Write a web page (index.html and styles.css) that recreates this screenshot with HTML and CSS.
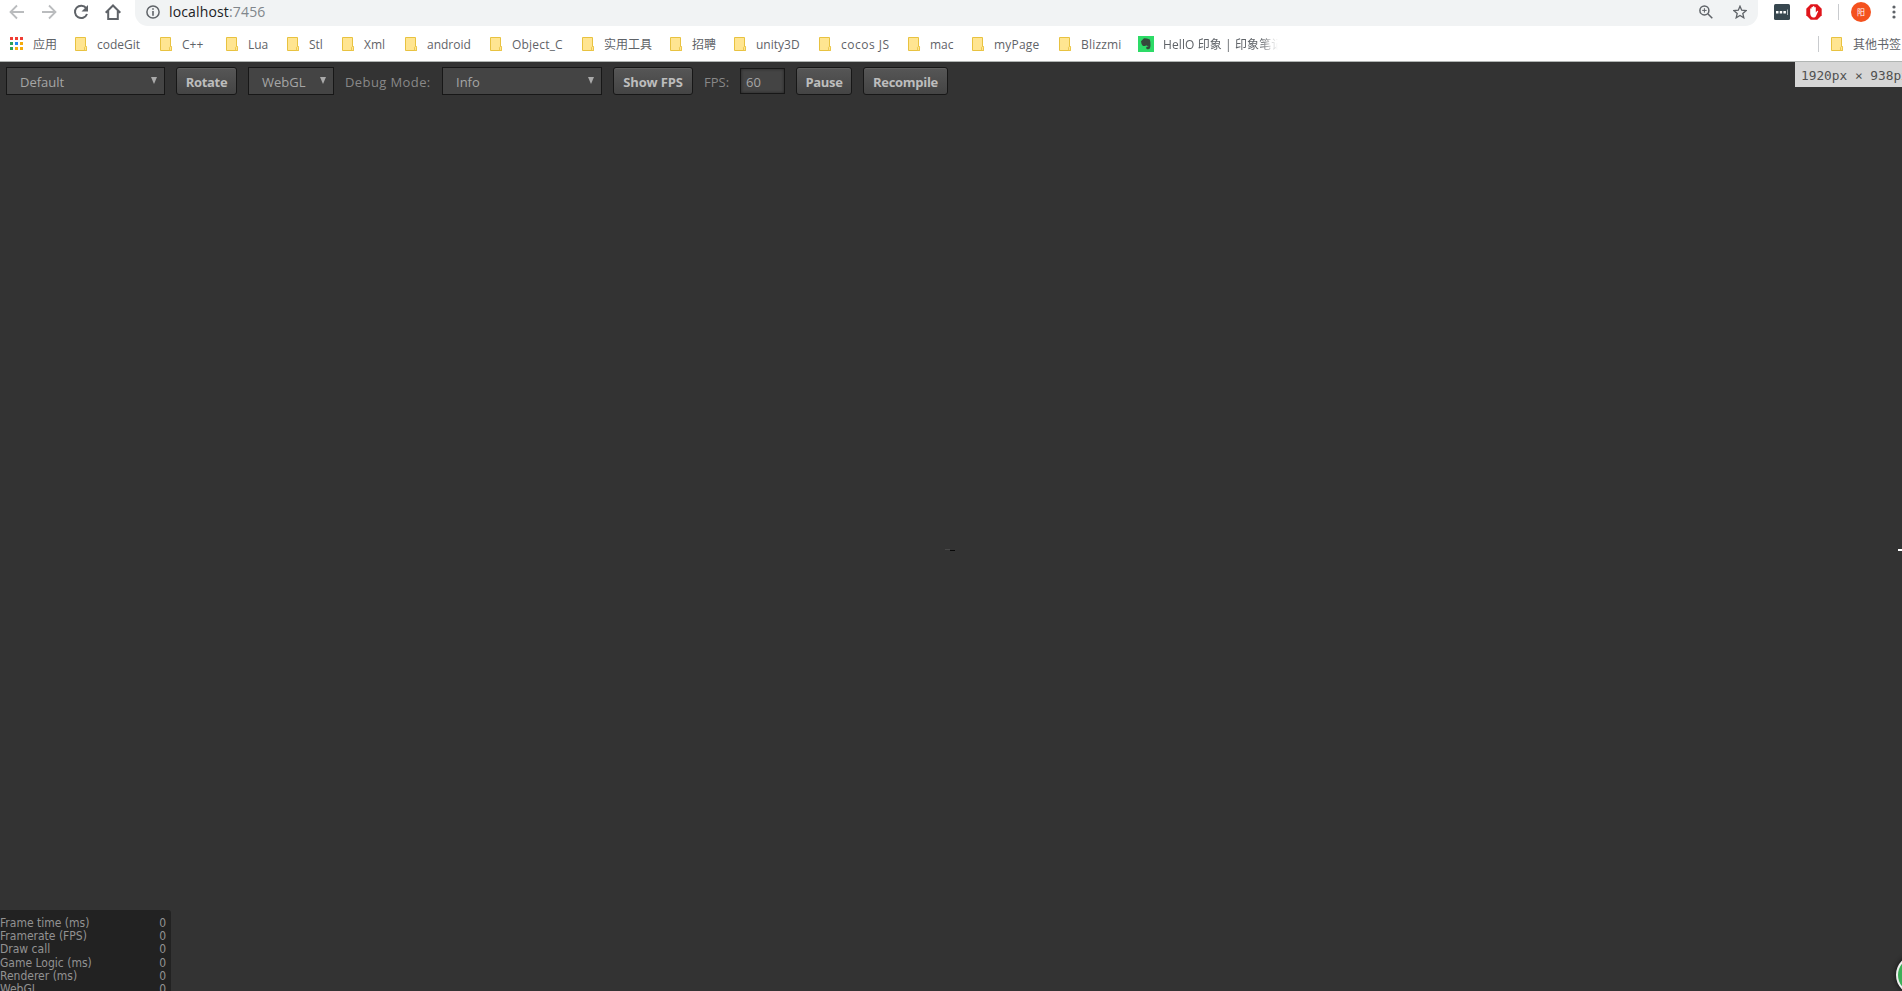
FILE: index.html
```html
<!DOCTYPE html>
<html lang="zh">
<head>
    <meta charset="UTF-8">
    <title>localhost:7456</title>
    <link rel="stylesheet" href="styles.css">
</head>
<body>
    <svg class="defs" width="0" height="0">
        <symbol id="folder" viewBox="0 0 13 14">
            <path d="M.5.5h10v9h1v4H.5z" fill="#ffe591" stroke="#e8c240"/>
            <path d="M9.5 13.5v-3.2l1-1 1 1v3.2z" fill="#ffe591" stroke="#e8c240" stroke-width=".8"/>
        </symbol>
    </svg>

    <div class="address-row">
        <div class="nav">
            <svg width="16" height="16" viewBox="0 0 16 16" fill="none" stroke="#babcbe" stroke-width="1.8"><path d="M15 8H2M8 1.5L1.5 8 8 14.5"/></svg>
            <svg width="16" height="16" viewBox="0 0 16 16" fill="none" stroke="#babcbe" stroke-width="1.8"><path d="M1 8h13M8 1.5L14.5 8 8 14.5"/></svg>
            <svg width="16" height="16" viewBox="0 0 16 16"><path d="M13.2 4.2A6.2 6.2 0 1 0 14 10" fill="none" stroke="#5f6368" stroke-width="2"/><path d="M15 1v6.5H8.5z" fill="#5f6368"/></svg>
            <svg width="16" height="16" viewBox="0 0 16 16" fill="none" stroke="#5f6368" stroke-width="2"><path d="M.7 8.7L8 1.5l7.3 7.2M3.2 7v8h9.6V7"/></svg>
        </div>
        <div class="omnibox">
            <svg width="14" height="14" viewBox="0 0 14 14"><circle cx="7" cy="7" r="6.1" fill="none" stroke="#5f6368" stroke-width="1.5"/><path d="M6.2 3.3h1.6v1.5H6.2zM6.2 6h1.6v4.7H6.2z" fill="#5f6368"/></svg>
            <span class="url">localhost<span class="port">:7456</span></span>
            <svg class="magnify" width="14" height="14" viewBox="0 0 14 14" fill="none" stroke="#5f6368" stroke-width="1.5"><circle cx="5.4" cy="5.4" r="4.5"/><path d="M8.8 8.8l4.5 4.5"/><path d="M3.2 5.4h4.4M5.4 3.2v4.4" stroke-width="1"/></svg>
            <svg width="14" height="14" viewBox="0 0 14 14" fill="none" stroke="#5f6368" stroke-width="1.3"><path d="M7 1.2l1.7 4 4.4.4-3.3 2.9 1 4.3L7 10.5l-3.8 2.3 1-4.3L.9 5.6l4.4-.4z"/></svg>
        </div>
        <div class="extensions">
            <svg width="16" height="16" viewBox="0 0 16 16"><rect width="16" height="16" rx="1.5" fill="#37474f"/><path d="M2 7h2.5v2.5H2zM5.700 7h2.500v2.500H5.700zM9.400 7h2.500v2.500H9.400z" fill="#fff"/><path d="M13.5 5.5v5.5" stroke="#aab4b8"/></svg>
            <svg class="adblock" width="16" height="16" viewBox="0 0 16 16"><path d="M4.7.3h6.6l4.4 4.4v6.6l-4.4 4.4H4.7L.3 11.3V4.7z" fill="#e0151b"/><path d="M4.200 9.500V4.800q.7-1 1.300 0V7V3.200q.7-1 1.400 0V7V2.600q.8-1 1.500 0V7V3.400q.7-1 1.400 0v5l1.200-1.500q1-.4 1.200.4l-2.400 5.100q-.7 1-1.700 1H7q-2.500-.3-2.800-3.900z" fill="#fff"/></svg>
            <span class="separator"></span>
            <span class="avatar">阳</span>
            <svg class="dots" width="4" height="14" viewBox="0 0 4 14" fill="#5f6368"><circle cx="2" cy="2" r="1.6"/><circle cx="2" cy="7" r="1.6"/><circle cx="2" cy="12" r="1.6"/></svg>
        </div>
    </div>

    <div class="bookmarks">
        <div class="bookmark apps">
            <svg width="13" height="13" viewBox="0 0 13 13"><path d="M0 0h3v3H0zM5 0h3v3H5zM10 0h3v3h-3z" fill="#f03d34"/><path d="M0 5h3v3H0zM0 10h3v3H0z" fill="#2da15a"/><path d="M5 5h3v3H5z" fill="#2188ef"/><path d="M10 5h3v3h-3zM5 10h3v3H5zM10 10h3v3h-3z" fill="#f5ab0b"/></svg>
            <span>应用</span>
        </div>
        <div class="bookmark w85"><svg class="folder"><use href="#folder"/></svg><span>codeGit</span></div>
        <div class="bookmark w66"><svg class="folder"><use href="#folder"/></svg><span>C++</span></div>
        <div class="bookmark w61"><svg class="folder"><use href="#folder"/></svg><span>Lua</span></div>
        <div class="bookmark w55"><svg class="folder"><use href="#folder"/></svg><span>Stl</span></div>
        <div class="bookmark w63"><svg class="folder"><use href="#folder"/></svg><span>Xml</span></div>
        <div class="bookmark w85"><svg class="folder"><use href="#folder"/></svg><span>android</span></div>
        <div class="bookmark w92 wide"><svg class="folder"><use href="#folder"/></svg><span>Object_C</span></div>
        <div class="bookmark w88"><svg class="folder"><use href="#folder"/></svg><span>实用工具</span></div>
        <div class="bookmark w64"><svg class="folder"><use href="#folder"/></svg><span>招聘</span></div>
        <div class="bookmark w85"><svg class="folder"><use href="#folder"/></svg><span>unity3D</span></div>
        <div class="bookmark w89 wider"><svg class="folder"><use href="#folder"/></svg><span>cocos JS</span></div>
        <div class="bookmark w64"><svg class="folder"><use href="#folder"/></svg><span>mac</span></div>
        <div class="bookmark w87 wide"><svg class="folder"><use href="#folder"/></svg><span>myPage</span></div>
        <div class="bookmark w79 wide"><svg class="folder"><use href="#folder"/></svg><span>Blizzmi</span></div>
        <div class="bookmark evernote">
            <svg width="16" height="16" viewBox="0 0 16 16"><rect width="16" height="16" fill="#2ddb67"/><path d="M3 5.2L6 2.3l3 .3 2.8.8q1 2.8.7 6.3-.3 3.6-2.2 3.6H9q-1-.7-.8-2 .8-1 2-.6V9.800q-1.300.3-2-.6-1.800 1.400-3.500.5Q3.200 8.200 3 5.200z" fill="#36473c"/></svg>
            <span class="fade">HellO 印象 | 印象笔记</span>
        </div>
        <div class="bookmark other"><svg class="folder"><use href="#folder"/></svg><span>其他书签</span></div>
    </div>

    <div class="game">
        <div class="toolbar">
            <div class="select device">Default<i></i></div>
            <button class="rotate">Rotate</button>
            <div class="select renderer">WebGL<i></i></div>
            <span class="label debug">Debug Mode:</span>
            <div class="select level">Info<i></i></div>
            <button class="show-fps">Show FPS</button>
            <span class="label fps">FPS:</span>
            <input type="text" value="60">
            <button class="pause">Pause</button>
            <button class="recompile">Recompile</button>
        </div>

        <div class="profiler">
            <div><span>Frame time (ms)</span><span>0</span></div>
            <div><span>Framerate (FPS)</span><span>0</span></div>
            <div><span>Draw call</span><span>0</span></div>
            <div><span>Game Logic (ms)</span><span>0</span></div>
            <div><span>Renderer (ms)</span><span>0</span></div>
            <div><span>WebGL</span><span>0</span></div>
        </div>

        <!-- overlays -->
        <div class="size-tip">1920px × 938px</div>
        <div class="speck"></div>
        <div class="edge-mark"></div>
        <div class="float-ball"></div>
    </div>
</body>
</html>
```
FILE: styles.css
```css
* {
    box-sizing: border-box;
}

body {
    margin: 0;
    height: 991px;
    overflow: hidden;
    display: flex;
    flex-direction: column;
    background: #fff;
    font-family: "Open Sans", "Noto Sans CJK SC", sans-serif;
    font-size: 12px;
}

svg {
    display: block;
    flex: none;
}

.defs {
    position: absolute;
}

/* browser bars */
.address-row {
    display: flex;
    height: 26px;
    flex: none;
}

.nav {
    display: flex;
    gap: 16px;
    width: 135px;
    padding: 4px 0 0 9px;
}

.omnibox {
    display: flex;
    align-items: center;
    width: 1623px;
    padding: 0 11px 2px;
    background: #f1f3f4;
    border-radius: 0 0 13px 13px;
}

.url {
    margin-left: 9px;
    font-size: 14px;
    line-height: 20px;
    letter-spacing: 0.15px;
    color: #202124;
}

.port {
    color: #80868b;
}

.magnify {
    margin-left: auto;
    margin-right: 20px;
}

.extensions {
    display: flex;
    align-items: center;
    padding: 0 0 2px 16px;
}

.adblock {
    margin-left: 16px;
}

.separator {
    width: 1px;
    height: 16px;
    margin-left: 16px;
    background: #c9cbce;
}

.avatar {
    width: 20px;
    height: 20px;
    margin-left: 12px;
    border-radius: 50%;
    background: #f4511e;
    color: #fff;
    font-size: 8px;
    line-height: 20px;
    text-align: center;
}

.dots {
    margin-left: 21px;
}

.bookmarks {
    display: flex;
    align-items: center;
    height: 36px;
    flex: none;
    border-bottom: 1px solid #b1b5b3;
    color: #5f6368;
}

.bookmark {
    display: flex;
    align-items: center;
    flex: none;
    height: 35px;
    white-space: nowrap;
}

.bookmark span {
    padding-top: 2px;
    line-height: 18px;
}

.wide {
    letter-spacing: 0.2px;
}

.wider {
    letter-spacing: 0.5px;
}

.folder {
    width: 13px;
    height: 14px;
    margin-right: 9px;
}

.apps {
    width: 75px;
    padding-left: 10px;
    gap: 10px;
}

.w55 { width: 55px; }
.w61 { width: 61px; }
.w63 { width: 63px; }
.w64 { width: 64px; }
.w66 { width: 66px; }
.w79 { width: 79px; }
.w85 { width: 85px; }
.w87 { width: 87px; }
.w88 { width: 88px; }
.w89 { width: 89px; }
.w92 { width: 92px; }

.evernote {
    gap: 9px;
}

.fade {
    width: 115px;
    overflow: hidden;
    letter-spacing: 0.1px;
    -webkit-mask-image: linear-gradient(to right, #000 84%, transparent);
    mask-image: linear-gradient(to right, #000 84%, transparent);
}

.other {
    margin-left: auto;
    margin-right: 1px;
}

.other::before {
    content: "";
    width: 1px;
    height: 16px;
    margin-right: 12px;
    background: #c9cbce;
}

/* preview page */
.game {
    position: relative;
    flex: 1;
    display: flex;
    flex-direction: column;
    justify-content: space-between;
    overflow: hidden;
    background: #333;
}

.toolbar {
    display: flex;
    align-items: center;
    height: 38px;
    padding: 0 6px;
    color: #a6a6a6;
    font-size: 13px;
}

.select {
    display: flex;
    align-items: center;
    justify-content: space-between;
    height: 28px;
    padding: 2px 7px 0 13px;
    border: 1px solid #171717;
    background: #444;
}

.select i {
    width: 6px;
    height: 7px;
    margin-top: -3px;
    background: #aaa;
    clip-path: polygon(0 0, 100% 0, 50% 100%);
}

.toolbar button {
    height: 28px;
    padding: 2px 0 0;
    border: 1px solid #171717;
    border-radius: 3px;
    background: linear-gradient(#565656, #444);
    box-shadow: inset 0 1px #606060;
    color: #bdbdbd;
    font: bold 13px "Open Sans", sans-serif;
    letter-spacing: -0.3px;
    white-space: nowrap;
}

.toolbar input {
    width: 45px;
    height: 26px;
    margin-right: 11px;
    padding: 2px 5px 0;
    border: 1px solid #171717;
    background: #444;
    box-shadow: inset 0 0 3px #222;
    color: #a6a6a6;
    font: 13px "Open Sans", sans-serif;
}

.label {
    padding-top: 2px;
    color: #888;
    white-space: nowrap;
}

.device { width: 159px; margin-right: 11px; }
.toolbar .rotate { width: 61px; margin-right: 11px; }
.renderer { width: 86px; margin-right: 11px; }
.debug { width: 97px; letter-spacing: 0.4px; }
.level { width: 160px; margin-right: 11px; }
.toolbar .show-fps { width: 80px; margin-right: 11px; letter-spacing: -0.15px; }
.fps { width: 36px; }
.toolbar .pause { width: 56px; margin-right: 11px; }
.toolbar .recompile { width: 85px; }

.profiler {
    width: 171px;
    height: 81px;
    padding: 7px 5px 0 0;
    border-radius: 0 3px 0 0;
    background: #222;
    color: #929292;
    font: 12px/13.2px "DejaVu Sans Condensed", "DejaVu Sans", sans-serif;
}

.profiler div {
    display: flex;
    justify-content: space-between;
    letter-spacing: 0;
}

.size-tip {
    position: absolute;
    top: 0;
    left: 1795px;
    height: 25px;
    padding-left: 6px;
    background: #d6d6d6;
    color: #505050;
    font: 12.8px/28px "DejaVu Sans Mono", monospace;
    white-space: nowrap;
}

.speck {
    position: absolute;
    top: 488px;
    left: 950px;
    width: 5px;
    height: 1px;
    background: #080808;
    box-shadow: -5px -1px #484848;
}

.edge-mark {
    position: absolute;
    top: 487px;
    right: 0;
    width: 4px;
    height: 2px;
    background: #fff;
}

.float-ball {
    position: absolute;
    top: 893px;
    left: 1896px;
    width: 40px;
    height: 40px;
    border: 2px solid #eee;
    border-radius: 50%;
    background: #3dae58;
    box-shadow: 0 0 5px #111;
}
```
